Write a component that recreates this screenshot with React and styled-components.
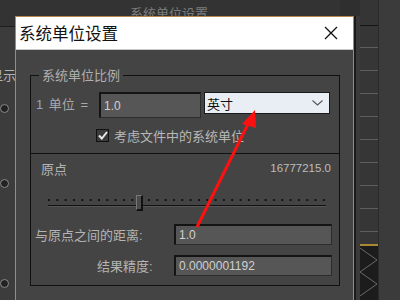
import React from 'react'
import styled, { createGlobalStyle } from 'styled-components'

const GlobalStyle = createGlobalStyle`
  html, body {
    margin: 0;
    padding: 0;
    background: #3a3a3a;
    overflow: hidden;
  }
  * { box-sizing: border-box; }
`

const UI_FONT = `"Liberation Sans", "Noto Sans CJK SC", sans-serif`

const Desktop = styled.div`
  position: relative;
  width: 400px;
  height: 300px;
  display: flex;
  flex-direction: row;
  font-family: ${UI_FONT};
  overflow: hidden;
`

const BackWindow = styled.div`
  width: 340px;
  display: flex;
  flex-direction: column;
`

const BackTitle = styled.div`
  height: 27px;
  background: #333;
  border-bottom: 1px solid #1d1d1d;
  color: #7c7c7c;
  font-size: 13px;
  padding: 3px 0 0 130px;
`

const BackBody = styled.div`
  flex: 1;
  background: #3c3c3c;
  display: flex;
`

const LeftStrip = styled.div`
  width: 15px;
  display: flex;
  flex-direction: column;
  align-items: flex-end;
  overflow: hidden;
`

const StripLabel = styled.div`
  margin-top: 38px;
  color: #b4b4b4;
  font-size: 13px;
  white-space: nowrap;
  margin-right: -1px;
`

const Radio = styled.div`
  width: 9px;
  height: 9px;
  border-radius: 50%;
  background: #222;
  border: 1px solid #8a8a8a;
  align-self: flex-start;
  margin-top: ${p => p.$gap}px;
`

const Gutter = styled.div`
  width: 20px;
  background: #2f2f2f;
  display: flex;
  flex-direction: column;
`

const GutterLower = styled.div`
  margin-top: 16px;
  flex: 1;
  background: #3a3a3a;
  border-left: 14px solid #3a3a3a;
  box-shadow: inset 1px 0 0 #1b1b1b;
`

const Ruler = styled.div`
  width: 19px;
  display: flex;
  flex-direction: column;
  background: #343434;
  border-right: 1px solid #2a2a2a;
`

const RulerTicks = styled.div`
  height: 249px;
  border-top: 25px solid #353535;
  box-shadow: inset 0 1px 0 #151515;
  background: repeating-linear-gradient(
    to bottom,
    transparent 0px,
    transparent 22px,
    #5e5e5e 22px,
    #5e5e5e 23px
  );
  background-color: #363636;
`

const GoldLine = styled.div`
  height: 2px;
  background: #a88a36;
`

const Zigzag = styled.div`
  flex: 1;
  background: #1c1c1c;
`

const RightPane = styled.div`
  flex: 1;
  background: #3b3b3b;
`

const Dialog = styled.div`
  position: absolute;
  left: 15px;
  top: 16px;
  width: 339px;
  height: 300px;
  border: 1px solid #b4874c;
  box-shadow: 2px 0 0 #1a1a1a;
  display: flex;
  flex-direction: column;
  background: #444;
`

const TitleBar = styled.div`
  height: 33px;
  background: #fff;
  border-bottom: 1px solid #c8c8c8;
  display: flex;
  align-items: center;
  justify-content: space-between;
  padding: 0 15px 0 3px;
`

const TitleText = styled.div`
  font-family: "Noto Sans CJK SC", sans-serif;
  font-size: 16.5px;
  color: #111;
`

const Body = styled.div`
  flex: 1;
  padding: 18px 13px 0 14px;
`

const Group = styled.fieldset`
  margin: 0;
  padding: 0;
  border: 1px solid #111;
  height: 218px;
  display: flex;
  flex-direction: column;
`

const Legend = styled.legend`
  margin-left: 8px;
  padding: 0 3px;
  color: #b0b0b0;
  font-size: 13px;
  line-height: 15px;
`

const TopSection = styled.div`
  padding: 9px 0 8px 0;
  border-bottom: 1px solid #111;
`

const UnitRow = styled.div`
  display: flex;
  align-items: flex-start;
`

const UnitLabel = styled.div`
  width: 68px;
  padding-left: 5px;
  height: 26px;
  line-height: 26px;
  color: #a8a8a8;
  font-size: 13px;
  word-spacing: 2px;
`

const One = styled.span`
  color: #8ea4c8;
`

const Field = styled.div`
  width: ${p => p.$w}px;
  height: ${p => p.$h}px;
  background: #565656;
  border-top: 2px solid #141414;
  border-left: 2px solid #141414;
  border-right: 1px solid #2c2c2c;
  border-bottom: 1px solid #2c2c2c;
  color: #d0d0d0;
  font-size: 12px;
  padding-left: 3px;
  display: flex;
  align-items: center;
`

const Select = styled.div`
  width: 126px;
  height: 22px;
  margin-left: 3px;
  background: #e9eef5;
  border: 1px solid #1a1a1a;
  display: flex;
  align-items: center;
  justify-content: space-between;
  padding: 0 6px 0 2px;
  color: #111;
  font-family: "Noto Sans CJK SC", sans-serif;
  font-size: 13px;
`

const CheckRow = styled.div`
  display: flex;
  align-items: center;
  padding-left: 65px;
  margin-top: 8px;
  color: #b8b8b8;
  font-size: 13px;
`

const Box = styled.div`
  width: 13px;
  height: 13px;
  background: #3a3a3a;
  border: 1px solid #111;
  margin-right: 5px;
  display: flex;
  align-items: center;
  justify-content: center;
`

const OriginHeader = styled.div`
  display: flex;
  justify-content: space-between;
  align-items: center;
  padding: 4px 8px 0 10px;
  height: 24px;
  color: #b4b4b4;
  font-size: 13px;
`

const Value = styled.span`
  font-size: 11.5px;
  color: #bcbcbc;
`

const Slider = styled.div`
  position: relative;
  margin: 21px 0 0 16px;
  width: 279px;
  height: 14px;
`

const Track = styled.div`
  position: absolute;
  left: 1px;
  right: 0;
  top: 6px;
  height: 2px;
  border-top: 1px solid #121212;
  border-bottom: 1px solid #555;
`

const Thumb = styled.div`
  position: absolute;
  left: 89px;
  top: -4px;
  width: 7px;
  height: 16px;
  background: #4a4a4a;
  border-top: 1px solid #777;
  border-left: 1px solid #777;
  border-right: 2px solid #111;
  border-bottom: 2px solid #111;
`

const FieldRow = styled.div`
  display: flex;
  align-items: center;
  margin-top: ${p => p.$top}px;
`

const FieldLabel = styled.div`
  width: 143px;
  padding-left: ${p => p.$indent}px;
  color: #b4b4b4;
  font-size: 13px;
`

const Arrow = styled.svg`
  position: absolute;
  left: 0;
  top: 0;
  pointer-events: none;
`

function TickDots() {
  const dots = []
  for (let i = 0; i < 34; i++) {
    dots.push(<rect key={i} x={1 + i * 8.33} y={0} width={2} height={2} fill="#141414" />)
  }
  return (
    <svg width="281" height="3" style={{ position: 'absolute', left: 0, top: 0 }}>
      {dots}
    </svg>
  )
}

export default function App() {
  return (
    <>
      <GlobalStyle />
      <Desktop>
        <BackWindow>
          <BackTitle>系统单位设置</BackTitle>
          <BackBody>
            <LeftStrip>
              <StripLabel>显示</StripLabel>
              <Radio $gap={20} />
              <Radio $gap={66} />
              <Radio $gap={91} />
            </LeftStrip>
          </BackBody>
        </BackWindow>
        <Gutter>
          <GutterLower />
        </Gutter>
        <Ruler>
          <RulerTicks />
          <GoldLine />
          <Zigzag>
            <svg width="18" height="50">
              <polyline points="0,2 17,14 0,26 17,38 0,50" fill="none" stroke="#6a6a6a" strokeWidth="1" />
            </svg>
          </Zigzag>
        </Ruler>
        <RightPane />

        <Dialog>
          <TitleBar>
            <TitleText>系统单位设置</TitleText>
            <svg width="14" height="14" viewBox="0 0 14 14">
              <path d="M1 1 L13 13 M13 1 L1 13" stroke="#111" strokeWidth="1.3" />
            </svg>
          </TitleBar>
          <Body>
            <Group>
              <Legend>系统单位比例</Legend>
              <TopSection>
                <UnitRow>
                  <UnitLabel><One>1</One> 单位 =</UnitLabel>
                  <Field $w={102} $h={26}>1.0</Field>
                  <Select>
                    英寸
                    <svg width="11" height="6" viewBox="0 0 11 6">
                      <path d="M0.5 0.5 L5.5 5 L10.5 0.5" fill="none" stroke="#555" strokeWidth="1.1" />
                    </svg>
                  </Select>
                </UnitRow>
                <CheckRow>
                  <Box>
                    <svg width="10" height="9" viewBox="0 0 10 9">
                      <path d="M1 4.5 L3.8 7.5 L9 1" fill="none" stroke="#e8e8e8" strokeWidth="2" />
                    </svg>
                  </Box>
                  考虑文件中的系统单位
                </CheckRow>
              </TopSection>
              <OriginHeader>
                <span>原点</span>
                <Value>16777215.0</Value>
              </OriginHeader>
              <Slider>
                <TickDots />
                <Track />
                <Thumb />
              </Slider>
              <FieldRow $top={11}>
                <FieldLabel $indent={4}>与原点之间的距离:</FieldLabel>
                <Field $w={158} $h={21}>1.0</Field>
              </FieldRow>
              <FieldRow $top={10}>
                <FieldLabel $indent={66}>结果精度:</FieldLabel>
                <Field $w={158} $h={21}>0.0000001192</Field>
              </FieldRow>
            </Group>
          </Body>
        </Dialog>

        <Arrow width="400" height="300">
          <line x1="197" y1="227" x2="248" y2="124" stroke="#ff1010" strokeWidth="3" />
          <polygon points="255,110 242,124 256,128" fill="#ff1010" />
        </Arrow>
      </Desktop>
    </>
  )
}
